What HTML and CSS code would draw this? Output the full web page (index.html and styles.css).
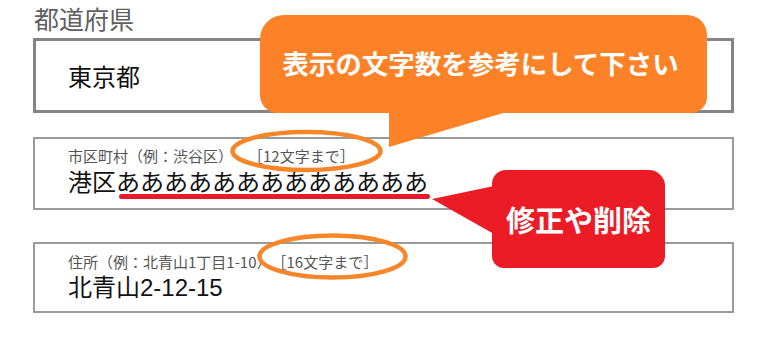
FILE: index.html
```html
<!DOCTYPE html>
<html lang="ja">
<head>
    <meta charset="UTF-8">
    <meta name="viewport" content="width=device-width, initial-scale=1.0">
    <title>住所入力</title>
    <link rel="stylesheet" href="styles.css">
</head>
<body>
    <div class="page">
        <div class="field-title">都道府県</div>
        <div class="box box-pref">東京都</div>

        <div class="box box-city">
            <div class="box-label">市区町村（例：渋谷区）　［12文字まで］</div>
            <div class="box-value">港区<span class="over">あああああああああああああ</span></div>
        </div>

        <div class="box box-addr">
            <div class="box-label">住所（例：北青山1丁目1-10）［16文字まで］</div>
            <div class="box-value">北青山2-12-15</div>
        </div>

        <svg class="marks" width="764" height="340" viewBox="0 0 764 340">
            <ellipse cx="306.5" cy="151" rx="74" ry="19" />
            <ellipse cx="332.5" cy="256.5" rx="73" ry="21" />
        </svg>

        <div class="callout callout-hint">表示の文字数を参考にして下さい</div>
        <div class="callout callout-edit">修正や削除</div>
    </div>
</body>
</html>
```

FILE: styles.css
```css
body {
    margin: 0;
    background-color: #fff;
    font-family: "Noto Sans CJK JP", "Liberation Sans", sans-serif;
    text-spacing-trim: space-all;
}
.page {
    position: relative;
    width: 764px;
    height: 340px;
    padding: 3px 0 0 33px;
    box-sizing: border-box;
    overflow: hidden;
}
.field-title {
    font-size: 25px;
    line-height: 30px;
    color: #5f5f5f;
    margin-bottom: 5px;
    padding-left: 1px;
}
.box {
    width: 701px;
    box-sizing: border-box;
    background-color: #fff;
}
.box-pref {
    height: 75px;
    border: 3px solid #858585;
    padding-left: 32px;
    font-size: 24px;
    line-height: 69px;
    color: #111;
}
.box-city {
    height: 73px;
    margin-top: 24px;
    border: 2px solid #9a9a9a;
    padding: 8px 0 11px 33px;
}
.box-addr {
    height: 71px;
    margin-top: 32px;
    border: 2px solid #9a9a9a;
    padding: 9px 0 9px 33px;
}
.box-label {
    font-size: 15px;
    line-height: 18px;
    color: #555;
}
.box-value {
    font-family: "Liberation Sans", "Noto Sans CJK JP", sans-serif;
    font-size: 24px;
    line-height: 28px;
    color: #111;
    margin-top: 4px;
}
.box-addr .box-value {
    margin-top: 3px;
}
.over {
    position: relative;
}
.over::after {
    content: "";
    position: absolute;
    left: 3px;
    right: -2px;
    bottom: -3px;
    height: 5px;
    border-radius: 3px;
    background-color: #e8192c;
}
.marks {
    position: absolute;
    left: 0;
    top: 0;
    pointer-events: none;
}
.marks ellipse {
    fill: none;
    stroke: #f7862a;
    stroke-width: 4.5;
}
.callout {
    position: absolute;
    display: flex;
    align-items: center;
    justify-content: center;
    color: #fff;
    font-weight: bold;
}
.callout::after {
    content: "";
    position: absolute;
    background-color: inherit;
}
.callout-hint {
    left: 260px;
    top: 15px;
    width: 447px;
    height: 98px;
    background-color: #fd8227;
    border-radius: 24px 20px 16px 18px;
    font-size: 26.5px;
    padding: 0 6px 4px 0;
    box-sizing: border-box;
}
.callout-hint::after {
    left: 129px;
    top: 96px;
    width: 121px;
    height: 36px;
    clip-path: polygon(0 0, 100% 0, 0 100%);
}
.callout-edit {
    left: 492px;
    top: 170px;
    width: 173px;
    height: 98px;
    background-color: #ec1c26;
    border-radius: 14px 16px 12px 12px;
    font-size: 29px;
}
.callout-edit::after {
    left: -60px;
    top: 16px;
    width: 62px;
    height: 48px;
    clip-path: polygon(100% 0, 100% 100%, 0 27%);
}
```
